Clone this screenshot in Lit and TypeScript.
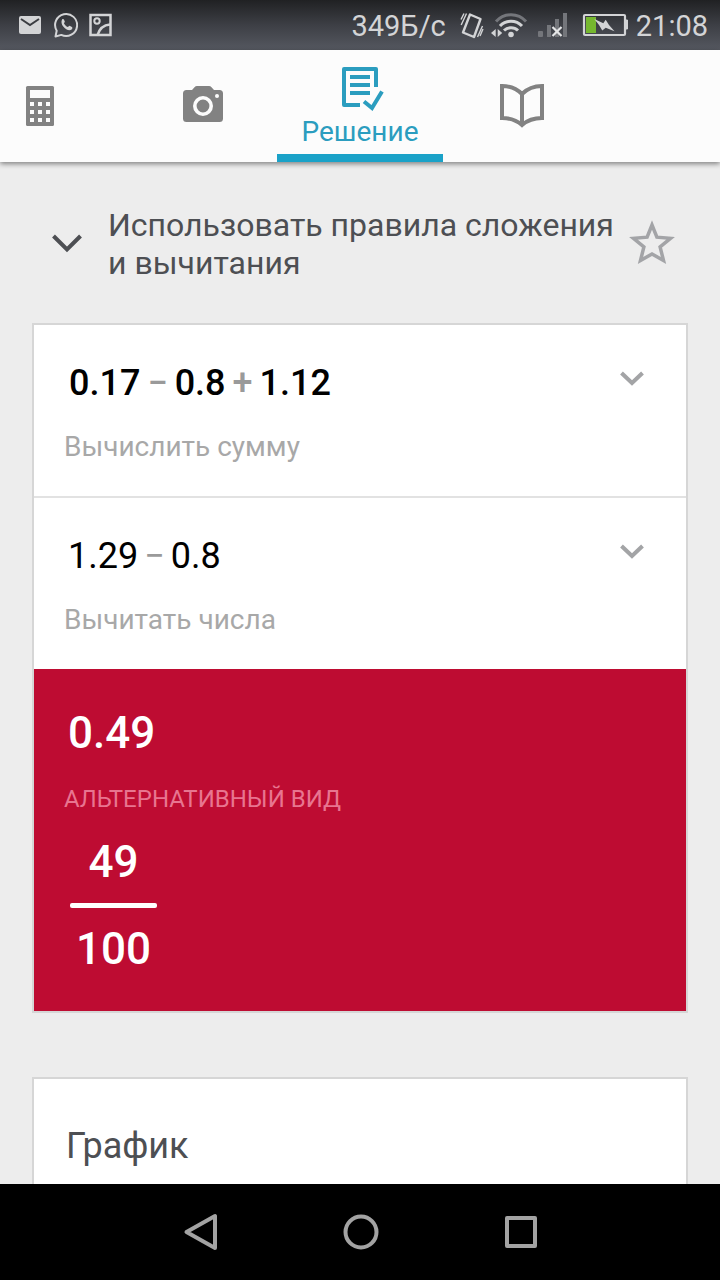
import { LitElement, html, css, svg } from "lit";
import { customElement, property } from "lit/decorators.js";

type Token = { text: string; operator?: boolean };
type Step = { tokens: Token[]; label: string; strong?: boolean };

const STEPS: Step[] = [
  {
    tokens: [
      { text: "0.17" },
      { text: "−", operator: true },
      { text: "0.8" },
      { text: "+", operator: true },
      { text: "1.12" },
    ],
    label: "Вычислить сумму",
    strong: true,
  },
  {
    tokens: [{ text: "1.29" }, { text: "−", operator: true }, { text: "0.8" }],
    label: "Вычитать числа",
  },
];

const reset = css`
  *,
  *::before,
  *::after {
    box-sizing: border-box;
  }
  button {
    margin: 0;
    padding: 0;
    border: 0;
    background: none;
    font: inherit;
    color: inherit;
    cursor: pointer;
  }
  svg {
    display: block;
    flex: none;
  }
`;

@customElement("status-bar")
export class StatusBar extends LitElement {
  static styles = [
    reset,
    css`
      :host {
        display: flex;
        flex: none;
        align-items: center;
        justify-content: space-between;
        height: 50px;
        padding: 2px 12px 0 18px;
        background: linear-gradient(#202123, #3d3f45 50%, #555860);
        color: #d3d4d6;
        font-size: 29px;
      }
      .group {
        display: flex;
        align-items: center;
      }
      .left {
        gap: 8px;
      }
      .speed {
        margin-right: 14px;
      }
      .wifi {
        margin-left: 6px;
      }
      .signal {
        margin-left: 10px;
      }
      .battery {
        margin: 0 8px 0 14px;
      }
    `,
  ];

  render() {
    return html`
      <div class="group left">
        <svg width="24" height="28" viewBox="0 0 24 28" aria-hidden="true">
          <rect x="1" y="4" width="22" height="18" rx="2" fill="#d3d4d6" />
          <path d="M3 7l9 6 9-6" fill="none" stroke="#3b3d42" stroke-width="2" />
        </svg>
        <svg width="28" height="28" viewBox="0 0 28 28" aria-hidden="true">
          <path d="M5.500 24.500l1.200-5.800a11 11 0 1 1 4.600 4.200z" fill="none" stroke="#d3d4d6" stroke-width="2" stroke-linejoin="round" />
          <path d="M12.200 7.200c.8-.6 1.500-.3 1.800.5l.8 1.900c.2.600-.9 1.500-.8 1.900.8 1.600 2 2.800 3.800 3.500.5.200 1.300-1.400 1.800-1.200l2.300 1.100c.8.500.5 1.900-.3 2.600-3.500 3.200-12.800-4.500-9.400-10.300z" fill="#d3d4d6" />
        </svg>
        <svg width="26" height="28" viewBox="0 0 26 28" aria-hidden="true">
          <g fill="none" stroke="#d3d4d6">
            <rect x="5.500" y="3" width="20" height="20" stroke-width="2.500" transform="translate(-1 0)" />
            <circle cx="11" cy="9" r="2.700" stroke-width="2" />
            <path d="M24 12.500c-6 .5-10.500 4-12.500 10.500" stroke-width="2.500" />
          </g>
        </svg>
      </div>
      <div class="group">
        <span class="speed">349Б/с</span>
        <svg width="24" height="28" viewBox="0 0 24 28" aria-hidden="true">
          <g fill="none" stroke="#d3d4d6">
            <path d="M10 2.500L20.500 7 14 25 3 20.500z" stroke-width="2.400" stroke-linejoin="round" />
            <path d="M1 7.500l3-6M1.200 13l5.300-11.500M20 24l3-7M17.500 25l5-11" stroke-width="1.400" />
          </g>
        </svg>
        <svg class="wifi" width="38" height="28" viewBox="0 0 38 28" aria-hidden="true">
          <g fill="none" stroke="#d3d4d6" stroke-width="3">
            <path d="M6 9.500a20 20 0 0 1 30 0" stroke="#74767b" />
            <path d="M10 14a15 15 0 0 1 22 0" />
            <path d="M14 18.500a10 10 0 0 1 14 0" />
          </g>
          <circle cx="21" cy="22.500" r="2.800" fill="#d3d4d6" />
          <path d="M5.700 17v8L1 21zM7.700 17v8l4.500-4z" fill="#d3d4d6" />
        </svg>
        <svg class="signal" width="30" height="28" viewBox="0 0 30 28" aria-hidden="true">
          <g fill="#74767b">
            <rect x="0" y="19" width="5" height="6" rx="1" />
            <rect x="9" y="13" width="4" height="12" />
            <rect x="17" y="7" width="4" height="18" />
            <rect x="25" y="1" width="4" height="24" />
          </g>
          <path d="M14.500 15l9 9M23.500 15l-9 9" stroke="#e4e5e6" stroke-width="2.200" />
        </svg>
        <svg class="battery" width="46" height="28" viewBox="0 0 46 28" aria-hidden="true">
          <rect x="2" y="3" width="41" height="20" rx="1" fill="none" stroke="#d3d4d6" stroke-width="2.200" />
          <path d="M44 8h1.500v9H44z" fill="#d3d4d6" stroke="#d3d4d6" />
          <rect x="4" y="5" width="10" height="16" fill="#76b82f" />
          <path d="M12.300 7l9 4.300 2.400-3.600L27 13l5.500 6.200-8.800-3.500-3.400 2.800L17 13z" fill="#d3d4d6" />
        </svg>
        <time>21:08</time>
      </div>
    `;
  }
}

@customElement("tab-bar")
export class TabBar extends LitElement {
  static styles = [
    reset,
    css`
      :host {
        display: block;
        flex: none;
        position: relative;
        background: #fcfcfc;
        box-shadow: 0 2px 5px rgba(0, 0, 0, 0.45);
      }
      .tabs {
        display: grid;
        grid-template-columns: 129fr 148fr 166fr 158fr 119fr;
        height: 112px;
      }
      .tab {
        display: flex;
        flex-direction: column;
        align-items: center;
        justify-content: center;
        color: #828282;
      }
      .first {
        align-items: flex-start;
        padding-left: 16px;
      }
      .active {
        justify-content: flex-end;
        border-bottom: 8px solid #1aa2c8;
        color: #2b9dbf;
        font-size: 28px;
        line-height: 36px;
        padding-bottom: 4px;
      }
    `,
  ];

  render() {
    return html`
      <nav class="tabs">
        <button class="tab first" aria-label="Калькулятор">
          <svg width="48" height="48" viewBox="0 0 48 48" aria-hidden="true">
            <rect x="10" y="4" width="28" height="40" rx="1.500" fill="currentColor" />
            <rect x="14" y="8" width="20" height="8" fill="#fcfcfc" />
            ${[20, 28, 36].map((y) =>
              [14, 22, 30].map((x) => svg`<rect x=${x} y=${y} width="4" height="4" fill="#fcfcfc" />`)
            )}
          </svg>
        </button>
        <button class="tab" aria-label="Камера">
          <svg width="48" height="48" viewBox="0 0 48 48" aria-hidden="true">
            <path d="M18 4h12q1.500 0 2.500 1.200L35 8h5.500q3.500 0 3.500 3.500V36.500q0 3.500-3.500 3.500h-33Q4 40 4 36.500V11.500Q4 8 7.500 8H13l2.500-2.800Q16.500 4 18 4z" fill="currentColor" />
            <circle cx="24" cy="24" r="8.200" fill="none" stroke="#fcfcfc" stroke-width="3.600" />
            <circle cx="38" cy="14" r="2" fill="#fcfcfc" />
          </svg>
        </button>
        <button class="tab active" aria-current="page">
          <svg width="48" height="48" viewBox="0 0 48 48" aria-hidden="true">
            <g fill="none" stroke="currentColor" stroke-width="4">
              <path d="M24 39H8V3h32v18" stroke-linejoin="round" />
              <path d="M14 11h20M14 19h20M14 27h20" />
              <path d="M28 35.500l8 6.500L46 25.500" />
            </g>
          </svg>
          <span>Решение</span>
        </button>
        <button class="tab" aria-label="Справочник">
          <svg width="48" height="48" viewBox="0 0 48 48" aria-hidden="true">
            <path d="M4 4Q16 4 24 12Q32 4 44 4V36Q32 36 24 43Q16 36 4 36zM24 12V43" fill="none" stroke="currentColor" stroke-width="4" />
          </svg>
        </button>
      </nav>
    `;
  }
}

@customElement("step-row")
export class StepRow extends LitElement {
  @property({ attribute: false }) step!: Step;

  static styles = [
    reset,
    css`
      :host {
        display: block;
      }
      :host(:not(:first-of-type)) {
        border-top: 2px solid #e2e2e2;
      }
      .row {
        display: flex;
        align-items: flex-start;
        justify-content: space-between;
        width: 100%;
        padding: 36px 38px 31px 30px;
        text-align: left;
      }
      .body {
        display: flex;
        flex-direction: column;
        gap: 24px;
      }
      .expression {
        display: flex;
        gap: 6px;
        padding-left: 4px;
        font-size: 36px;
        line-height: 44px;
        color: #000;
      }
      .strong {
        gap: 7px;
        padding-left: 5px;
        font-weight: 500;
      }
      .operator {
        color: #9a9a9a;
      }
      .label {
        font-size: 28px;
        line-height: 36px;
        color: #a8a8a8;
      }
      .chevron {
        margin-top: 5px;
      }
    `,
  ];

  render() {
    const { tokens, label, strong } = this.step;
    return html`
      <button class="row">
        <span class="body">
          <span class="expression ${strong ? "strong" : ""}">
            ${tokens.map((t) => html`<span class=${t.operator ? "operator" : "number"}>${t.text}</span>`)}
          </span>
          <span class="label">${label}</span>
        </span>
        <svg class="chevron" width="32" height="24" viewBox="0 0 32 24" aria-hidden="true">
          <path d="M5.500 7L16 17 26.500 7" fill="none" stroke="#a3a4a6" stroke-width="4" />
        </svg>
      </button>
    `;
  }
}

@customElement("answer-panel")
export class AnswerPanel extends LitElement {
  static styles = [
    reset,
    css`
      :host {
        display: flex;
        flex-direction: column;
        align-items: flex-start;
        padding: 38px 30px 36px;
        background: #be0c32;
        color: #fff;
        font-size: 44px;
        font-weight: 500;
        line-height: 52px;
      }
      .result {
        padding-left: 4px;
      }
      .label {
        margin: 24px 0 21px;
        color: #e87590;
        font-size: 24px;
        font-weight: 400;
        line-height: 32px;
        text-transform: uppercase;
      }
      .fraction {
        display: flex;
        flex-direction: column;
        gap: 15px;
        margin-left: 6px;
        text-align: center;
      }
      .bar {
        height: 5px;
        border-radius: 2px;
        background: #fff;
      }
      .denominator {
        padding: 0 6px;
      }
    `,
  ];

  render() {
    return html`
      <div class="result">0.49</div>
      <div class="label">Альтернативный вид</div>
      <div class="fraction">
        <span>49</span>
        <span class="bar"></span>
        <span class="denominator">100</span>
      </div>
    `;
  }
}

@customElement("system-nav")
export class SystemNav extends LitElement {
  static styles = [
    reset,
    css`
      :host {
        display: flex;
        flex: none;
        align-items: center;
        justify-content: center;
        gap: 112px;
        height: 96px;
        background: #000;
      }
      svg {
        fill: none;
        stroke: #a3a3a3;
        stroke-width: 4;
        stroke-linejoin: round;
      }
    `,
  ];

  render() {
    return html`
      <button aria-label="Назад">
        <svg width="48" height="48" viewBox="0 0 48 48"><path d="M10.500 24L39 8v32z" /></svg>
      </button>
      <button aria-label="Домой">
        <svg width="48" height="48" viewBox="0 0 48 48"><circle cx="25" cy="24" r="15.500" /></svg>
      </button>
      <button aria-label="Недавние">
        <svg width="48" height="48" viewBox="0 0 48 48"><rect x="11" y="10" width="28" height="28" /></svg>
      </button>
    `;
  }
}

@customElement("app-root")
export class AppRoot extends LitElement {
  static styles = [
    reset,
    css`
      :host {
        display: flex;
        flex-direction: column;
        height: 100vh;
        overflow: hidden;
        background: #ededed;
        font-family: Roboto, "Noto Sans", sans-serif;
      }
      .content {
        flex: 1;
        min-height: 0;
        overflow: hidden;
        padding: 44px 32px 0;
      }
      .method {
        display: flex;
        align-items: center;
        padding: 0 12px 0 16px;
        margin-bottom: 41px;
        color: #4d4f53;
      }
      .title {
        flex: 1;
        margin: 0 0 0 22px;
        font-size: 32px;
        font-weight: 400;
        line-height: 38px;
      }
      .card {
        border: 2px solid #d6d6d6;
        background: #fff;
        margin-bottom: 64px;
      }
      .card-title {
        margin: 0;
        padding: 45px 32px 80px;
        color: #4d4f53;
        font-size: 36px;
        font-weight: 400;
        line-height: 44px;
      }
    `,
  ];

  render() {
    return html`
      <status-bar></status-bar>
      <tab-bar></tab-bar>
      <main class="content">
        <header class="method">
          <button aria-label="Свернуть">
            <svg width="38" height="32" viewBox="0 0 38 32" aria-hidden="true">
              <path d="M5.500 8L19 21.500 32.500 8" fill="none" stroke="#4d4f53" stroke-width="4" />
            </svg>
          </button>
          <h1 class="title">Использовать правила сложения и вычитания</h1>
          <button aria-label="В избранное">
            <svg width="48" height="48" viewBox="0 0 48 48" aria-hidden="true">
              <path d="M24 5l4.900 12.200 13.600 1.100-10.400 8.500L35.500 40.500 24 34 12.500 40.500l3.400-13.700L5.500 18.300l13.600-1.100z" fill="none" stroke="#a3a4a7" stroke-width="3.500" />
            </svg>
          </button>
        </header>
        <section class="card">
          ${STEPS.map((s) => html`<step-row .step=${s}></step-row>`)}
          <answer-panel></answer-panel>
        </section>
        <section class="card">
          <h2 class="card-title">График</h2>
        </section>
      </main>
      <system-nav></system-nav>
    `;
  }
}
